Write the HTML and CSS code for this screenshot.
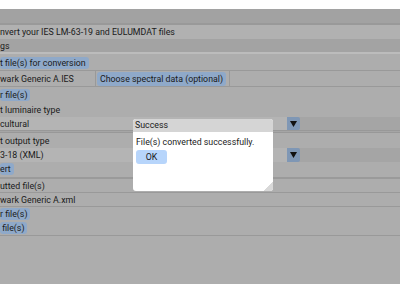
FILE: index.html
```html
<!DOCTYPE html>
<html lang="en">
<head>
    <meta charset="UTF-8">
    <title>Converter</title>
    <link rel="stylesheet" href="styles.css">
</head>
<body>
    <div class="app">
        <div class="topbar"></div>
        <div class="row heading">nvert your IES LM-63-19 and EULUMDAT files</div>
        <div class="row section">gs</div>
        <div class="row pick">
            <span class="btn">t file(s) for conversion</span>
        </div>
        <div class="row files">
            <span class="cell name">wark Generic A.IES</span>
            <span class="cell spectral"><span class="btn">Choose spectral data (optional)</span></span>
        </div>
        <div class="row small">
            <span class="btn">r file(s)</span>
        </div>
        <div class="row label">t luminaire type</div>
        <div class="row combo">
            <span class="field">cultural</span>
            <span class="arrow"><svg width="7" height="6" viewBox="0 0 7 6"><path d="M0 0H7L3.5 6Z" fill="#111"/></svg></span>
        </div>
        <div class="row label second">t output type</div>
        <div class="row combo light">
            <span class="field">3-18 (XML)</span>
            <span class="arrow"><svg width="7" height="6" viewBox="0 0 7 6"><path d="M0 0H7L3.5 6Z" fill="#111"/></svg></span>
        </div>
        <div class="row small">
            <span class="btn">ert</span>
        </div>
        <div class="row label out">utted file(s)</div>
        <div class="row outname">wark Generic A.xml</div>
        <div class="row small">
            <span class="btn">r file(s)</span>
        </div>
        <div class="row small last">
            <span class="btn">&nbsp;file(s)</span>
        </div>
    </div>

    <div class="dialog">
        <div class="dialog-title">Success</div>
        <div class="dialog-body">
            <p>File(s) converted successfully.</p>
            <span class="ok">OK</span>
        </div>
        <div class="grip"></div>
    </div>
</body>
</html>
```

FILE: styles.css
```css
* {
    margin: 0;
    padding: 0;
    box-sizing: border-box;
}

body {
    font-family: Roboto, "Liberation Sans", sans-serif;
    font-size: 8.8px;
    color: #1a1a1a;
    background: #adadad;
    width: 400px;
    height: 284px;
    overflow: hidden;
    position: relative;
}

.app {
    display: flex;
    flex-direction: column;
}

.topbar {
    height: 25px;
    background: #a2a2a2;
    border-top: 9px solid #fff;
    border-bottom: 2px solid #999;
}

.row {
    display: flex;
    align-items: center;
    white-space: nowrap;
}

.heading {
    height: 14px;
    background: #b1b1b1;
}

.section {
    height: 15px;
    background: #a3a3a3;
    border-bottom: 2px solid #bcbcbc;
}

.pick {
    height: 17px;
    padding-top: 1px;
    border-bottom: 1px solid #999;
}

.btn {
    background: #8fa9c9;
    border-radius: 3px;
    padding: 0 3px 0 0;
    height: 12px;
    display: inline-flex;
    align-items: center;
}

.files {
    height: 16px;
    border-bottom: 1px solid #999;
    align-items: stretch;
}

.cell {
    display: flex;
    align-items: center;
}

.name {
    width: 96px;
    border-right: 1px solid #999;
}

.spectral {
    width: 134px;
    padding-left: 1px;
    border-right: 1px solid #999;
}

.spectral .btn {
    padding: 0 3px;
    height: 14px;
}

.small {
    height: 14px;
}

.pick + .files + .small {
    height: 15px;
}

.label {
    height: 15px;
}

.label.second {
    height: 15px;
    padding-top: 1px;
}

.combo {
    height: 16px;
    background: #a5a5a5;
    border-bottom: 3px double #989898;
    align-items: stretch;
}

.combo .field {
    width: 287px;
    display: flex;
    align-items: center;
    background: #b4b4b4;
}

.combo.light {
    border-bottom: none;
    height: 14px;
}

.combo.light + .small {
    height: 13px;
}

.arrow {
    width: 13px;
    background: #7f97b5;
    border-radius: 0 2px 2px 0;
    display: flex;
    align-items: center;
    justify-content: center;
}

.out {
    border-top: 2px solid #9a9a9a;
    height: 16px;
    padding-top: 1px;
    margin-top: 2px;
    border-bottom: 1px solid #999;
}

.outname {
    height: 14px;
    border-bottom: 1px solid #999;
}

.last {
    border-bottom: 1px solid #999;
    height: 15px;
}

.dialog {
    position: absolute;
    left: 133px;
    top: 119px;
    width: 140px;
    height: 72px;
    background: #fff;
    border-radius: 3px;
    overflow: hidden;
}

.dialog-title {
    height: 13px;
    background: #d5d5d5;
    padding-left: 2px;
    line-height: 13px;
}

.dialog-body {
    padding: 3px 3px;
}

.dialog-body p {
    line-height: 14px;
}

.ok {
    display: inline-block;
    margin-top: 1px;
    width: 31px;
    height: 14px;
    line-height: 14px;
    text-align: center;
    background: #b7d5fb;
    border-radius: 3px;
}

.grip {
    position: absolute;
    right: 0;
    bottom: 0;
    width: 10px;
    height: 10px;
    background: linear-gradient(135deg, transparent 50%, #d8d8d8 50%);
}
```
